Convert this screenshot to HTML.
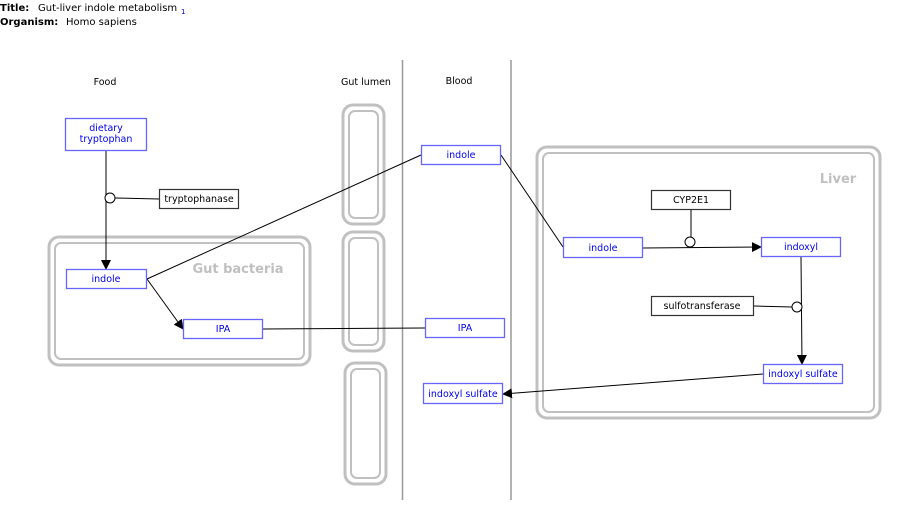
<!DOCTYPE html>
<html><head><meta charset="utf-8"><style>
html,body{margin:0;padding:0;background:#fff;width:897px;height:514px;overflow:hidden}
svg{display:block;font-family:"DejaVu Sans","Liberation Sans",sans-serif}
</style></head><body>
<svg width="897" height="514" viewBox="0 0 897 514" xmlns="http://www.w3.org/2000/svg">
<defs>
<marker id="a" markerWidth="10" markerHeight="10" refX="9" refY="5" orient="auto" markerUnits="userSpaceOnUse"><path d="M0,0 L10,5 L0,10 Z" fill="#000"/></marker>
</defs>
<text x="0" y="11" font-size="10" font-weight="bold">Title:</text>
<text x="38" y="11" font-size="10">Gut-liver indole metabolism</text>
<text x="181" y="14" font-size="7" fill="#00c">1</text>
<text x="0" y="25" font-size="10" font-weight="bold">Organism:</text>
<text x="66" y="25" font-size="10">Homo sapiens</text>

<g font-size="9.5" text-anchor="middle">
<text x="105" y="85">Food</text>
<text x="366" y="85">Gut lumen</text>
<text x="459" y="84">Blood</text>
</g>
<line x1="402.5" y1="60" x2="402.5" y2="500" stroke="#999" stroke-width="1.5"/>
<line x1="511" y1="60" x2="511" y2="500" stroke="#999" stroke-width="1.5"/>

<g fill="none" stroke="#c0c0c0" stroke-width="3">
<rect x="49" y="237" width="261" height="128" rx="10"/>
<rect x="55" y="243" width="249" height="116" rx="6" stroke-width="2"/>
<rect x="537" y="147" width="343" height="271" rx="10"/>
<rect x="543" y="153" width="331" height="259" rx="6" stroke-width="2"/>
<rect x="343" y="105" width="41" height="119" rx="10"/>
<rect x="349" y="111" width="29" height="107" rx="6" stroke-width="2"/>
<rect x="343" y="232" width="41" height="119" rx="10"/>
<rect x="349" y="238" width="29" height="107" rx="6" stroke-width="2"/>
<rect x="345" y="363" width="41" height="121" rx="10"/>
<rect x="351" y="369" width="29" height="109" rx="6" stroke-width="2"/>
</g>
<text x="238" y="273" font-size="13" font-weight="bold" fill="#c0c0c0" text-anchor="middle">Gut bacteria</text>
<text x="838" y="183" font-size="13" font-weight="bold" fill="#c0c0c0" text-anchor="middle">Liver</text>

<g stroke="#000" stroke-width="1" fill="none">
<line x1="106" y1="151" x2="106" y2="269" marker-end="url(#a)"/>
<line x1="159" y1="199" x2="115" y2="198"/>
<line x1="147" y1="279" x2="183" y2="329" marker-end="url(#a)"/>
<line x1="147" y1="279" x2="421" y2="155"/>
<line x1="263" y1="329" x2="425" y2="328"/>
<line x1="501" y1="155" x2="563" y2="247"/>
<line x1="643" y1="248" x2="761" y2="247" marker-end="url(#a)"/>
<line x1="691" y1="210" x2="691" y2="237"/>
<line x1="801" y1="257" x2="802" y2="364" marker-end="url(#a)"/>
<line x1="754" y1="306" x2="792" y2="307"/>
<line x1="763" y1="374" x2="503" y2="394" marker-end="url(#a)"/>
<circle cx="110" cy="198" r="5" fill="#fff"/>
<circle cx="690" cy="242" r="5" fill="#fff"/>
<circle cx="797" cy="307" r="5" fill="#fff"/>
</g>

<g fill="#fff" stroke="#66f" stroke-width="1.3">
<rect x="65.5" y="118.5" width="81" height="32"/>
<rect x="66.5" y="269.5" width="80" height="19"/>
<rect x="183.5" y="319.5" width="79" height="19"/>
<rect x="421.5" y="145.5" width="79" height="19"/>
<rect x="425.5" y="318.5" width="79" height="19"/>
<rect x="423.5" y="383.5" width="79" height="20"/>
<rect x="563.5" y="237.5" width="79" height="20"/>
<rect x="761.5" y="237.5" width="79" height="19"/>
<rect x="763.5" y="364.5" width="79" height="19"/>
</g>
<g fill="#fff" stroke="#333" stroke-width="1.2">
<rect x="159.5" y="189.5" width="79" height="19"/>
<rect x="651.5" y="190.5" width="79" height="19"/>
<rect x="651.5" y="296.5" width="102" height="19"/>
</g>
<g font-size="9.5" text-anchor="middle" fill="#00e">
<text x="106" y="131">dietary</text>
<text x="106" y="142">tryptophan</text>
<text x="106" y="282">indole</text>
<text x="223" y="332">IPA</text>
<text x="461" y="158">indole</text>
<text x="465" y="331">IPA</text>
<text x="463" y="397">indoxyl sulfate</text>
<text x="603" y="251">indole</text>
<text x="801" y="250">indoxyl</text>
<text x="803" y="377">indoxyl sulfate</text>
</g>
<g font-size="9.5" text-anchor="middle" fill="#000">
<text x="199" y="202">tryptophanase</text>
<text x="691" y="203">CYP2E1</text>
<text x="702" y="309">sulfotransferase</text>
</g>
</svg>
</body></html>
